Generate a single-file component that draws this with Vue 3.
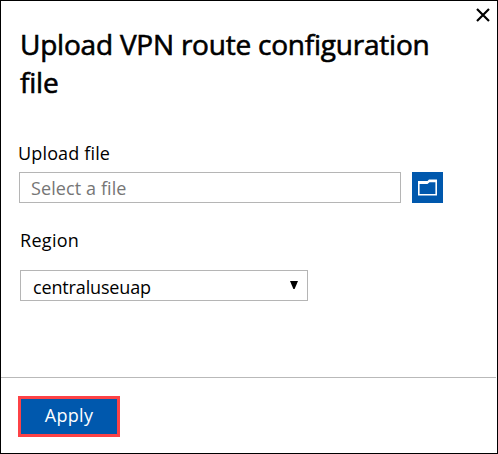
<script setup>
import { ref } from 'vue'

const region = ref('centraluseuap')
</script>

<template>
  <main class="dialog">
    <header class="head">
      <h1 class="title">Upload VPN route configuration<br />file</h1>
      <button class="close" aria-label="Close">
        <svg width="14" height="14" viewBox="0 0 14 14"><path d="M1 1 13 13M13 1 1 13" /></svg>
      </button>
    </header>
    <section class="body">
      <label class="label upload-label">Upload file</label>
      <div class="file-row">
        <div class="field file-field"><span class="placeholder">Select a file</span></div>
        <button class="browse" aria-label="Browse">
          <svg width="31" height="31" viewBox="0 0 31 31"><path fill-rule="evenodd" d="M6 9H15.5L17 7.5H25V23.5H6ZM7.6 12V22H23.4V10.2H17.5L15.5 12Z" /></svg>
        </button>
      </div>
      <label class="label region-label">Region</label>
      <div class="field select">
        <span class="value">{{ region }}</span>
        <svg class="arrow" width="8" height="8" viewBox="0 0 8 8"><path d="M0 0H8L4.6 8H3.4Z" /></svg>
      </div>
    </section>
    <footer class="foot">
      <button class="apply"><span class="apply-text">Apply</span></button>
    </footer>
  </main>
</template>

<style>
body {
  margin: 0;
  background: #fff;
}
</style>

<style scoped>
* {
  box-sizing: border-box;
}
.dialog {
  width: 498px;
  height: 454px;
  border: 1px solid #000;
  background: #fff;
  color: #000;
  display: flex;
  flex-direction: column;
  font-family: "Open Sans", "Noto Sans", sans-serif;
  font-size: 18px;
  font-variant-ligatures: none;
}
button {
  padding: 0;
  border: 0;
  background: none;
  font: inherit;
}
.head {
  display: flex;
  justify-content: space-between;
  align-items: flex-start;
  height: 140px;
  padding-left: 19px;
}
.title {
  margin: 24px 0 0;
  font-size: 28px;
  line-height: 38px;
  font-weight: 500;
  letter-spacing: -0.22px;
  -webkit-text-stroke: 0.6px #000;
  white-space: nowrap;
}
.close {
  display: flex;
  margin: 7px 7px 0 0;
}
.close path {
  fill: none;
  stroke: #000;
  stroke-width: 2.2;
}
.body {
  flex: 1;
  padding-left: 18px;
  display: flex;
  flex-direction: column;
  align-items: flex-start;
}
.label {
  line-height: 24px;
  height: 24px;
}
.upload-label {
  margin-left: -1px;
  letter-spacing: 0.15px;
}
.file-row {
  display: flex;
  gap: 11px;
  margin-top: 7px;
}
.field {
  height: 31px;
  border: 1px solid #b5b5b5;
  display: flex;
  align-items: center;
}
.file-field {
  width: 382px;
  padding-left: 11px;
}
.placeholder {
  color: #767676;
  letter-spacing: 0.1px;
}
.browse {
  display: flex;
  width: 31px;
  height: 31px;
  background: #0058ad;
}
.browse path {
  fill: #fff;
}
.region-label {
  margin: 25px 0 0 1px;
  letter-spacing: 0.3px;
}
.select {
  width: 288px;
  margin: 18px 0 0 1px;
  padding: 0 9px 0 12px;
  justify-content: space-between;
}
.value {
  padding-top: 2px;
  letter-spacing: -0.15px;
}
.arrow {
  margin-bottom: 1px;
}
.foot {
  height: 76px;
  margin-right: 1px;
  border-top: 1px solid #b9b9b9;
  padding: 18px 0 0 17px;
}
.apply {
  display: flex;
  align-items: center;
  justify-content: center;
  width: 102px;
  height: 41px;
  border: 3px solid #fd4246;
  background: #0058ad;
  color: #fff;
}
.apply-text {
  padding: 0 0 3px 0;
  letter-spacing: 0.3px;
}
</style>
